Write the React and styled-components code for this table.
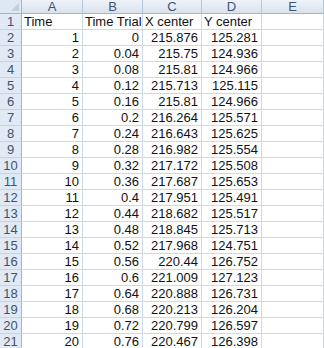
import React from "react";
import styled, { createGlobalStyle } from "styled-components";

const Global = createGlobalStyle`
  html, body { margin: 0; padding: 0; background: #fff; }
  body { font-family: "Liberation Sans", Arial, sans-serif; }
`;

const Sheet = styled.div`
  display: grid;
  grid-template-columns: 22px 61px 60px 59px 60px 62px;
  grid-template-rows: 14px repeat(21, 16px);
  width: 324px;
  height: 348px;
  overflow: hidden;
  font-family: "Liberation Sans", Arial, sans-serif;
  font-size: 13px;
`;

const ColHead = styled.div`
  box-sizing: border-box;
  background: linear-gradient(#eef3f9, #d9e2ed);
  border-right: 1px solid #b7c6d7;
  border-bottom: 1px solid #9eb6ce;
  color: #3f5470;
  display: flex;
  align-items: center;
  justify-content: center;
  font-size: 13px;
  line-height: 1;
`;

const Corner = styled(ColHead)`
  position: relative;
  background: #dfe7f1;
  border-right: 1px solid #9eb6ce;
`;

const CornerMark = styled.div`
  position: absolute;
  right: 2px;
  bottom: 2px;
  width: 0;
  height: 0;
  border-left: 8px solid transparent;
  border-bottom: 8px solid #c2cedb;
`;

const RowHead = styled.div`
  box-sizing: border-box;
  background: #e0e9f4;
  border-right: 1px solid #9eb6ce;
  border-bottom: 1px solid #c5d3e3;
  color: #3f5470;
  display: flex;
  align-items: center;
  justify-content: center;
  font-size: 13px;
  line-height: 1;
`;

const Cell = styled.div`
  box-sizing: border-box;
  border-right: 1px solid #d0d7e5;
  border-bottom: 1px solid #d0d7e5;
  color: #111;
  display: flex;
  align-items: center;
  justify-content: ${(p) => (p.$num ? "flex-end" : "flex-start")};
  padding: 0 3px 0 2px;
  white-space: nowrap;
  overflow: hidden;
  line-height: 1;
`;

const cols = ["A", "B", "C", "D", "E"];

const data = [
  [1, 0, 215.876, 125.281],
  [2, 0.04, 215.75, 124.936],
  [3, 0.08, 215.81, 124.966],
  [4, 0.12, 215.713, 125.115],
  [5, 0.16, 215.81, 124.966],
  [6, 0.2, 216.264, 125.571],
  [7, 0.24, 216.643, 125.625],
  [8, 0.28, 216.982, 125.554],
  [9, 0.32, 217.172, 125.508],
  [10, 0.36, 217.687, 125.653],
  [11, 0.4, 217.951, 125.491],
  [12, 0.44, 218.682, 125.517],
  [13, 0.48, 218.845, 125.713],
  [14, 0.52, 217.968, 124.751],
  [15, 0.56, 220.44, 126.752],
  [16, 0.6, 221.009, 127.123],
  [17, 0.64, 220.888, 126.731],
  [18, 0.68, 220.213, 126.204],
  [19, 0.72, 220.799, 126.597],
  [20, 0.76, 220.467, 126.398],
];

const headers = ["Time", "Time Trial", "X center", "Y center", ""];

export default function App() {
  return (
    <>
      <Global />
      <Sheet>
        <Corner>
          <CornerMark />
        </Corner>
        {cols.map((c) => (
          <ColHead key={c}>{c}</ColHead>
        ))}
        <RowHead>1</RowHead>
        {headers.map((h, i) => (
          <Cell key={"h" + i}>{h}</Cell>
        ))}
        {data.map((row, r) => (
          <React.Fragment key={r}>
            <RowHead>{r + 2}</RowHead>
            {row.map((v, i) => (
              <Cell key={i} $num>
                {String(v)}
              </Cell>
            ))}
            <Cell />
          </React.Fragment>
        ))}
      </Sheet>
    </>
  );
}
